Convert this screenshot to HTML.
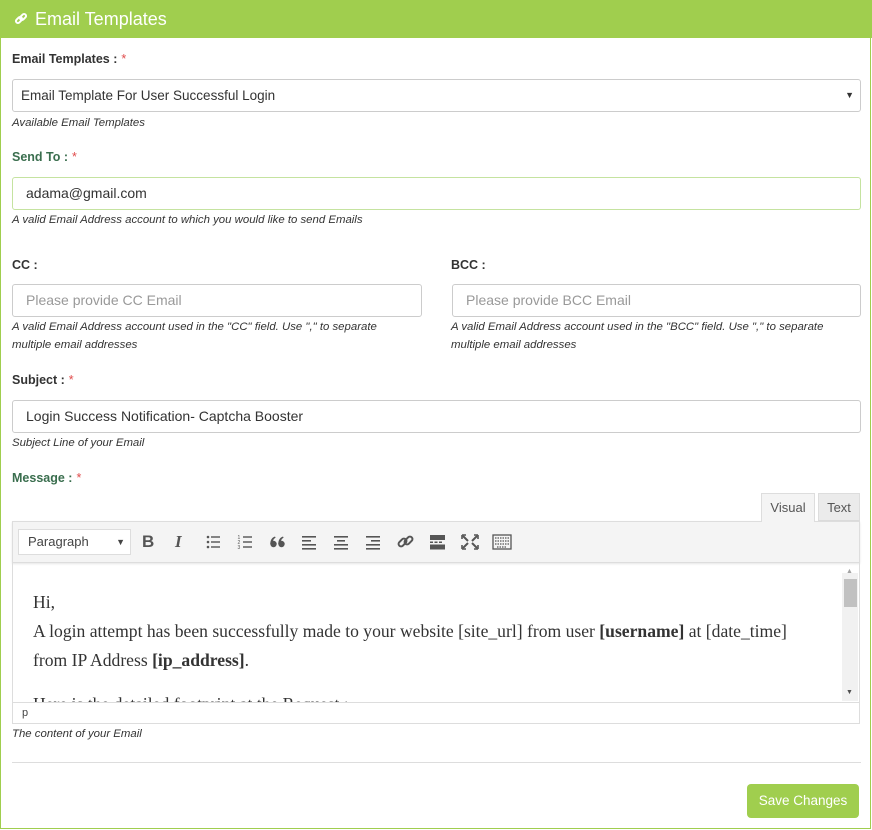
<!DOCTYPE html>
<html><head><meta charset="utf-8"><style>
*{box-sizing:border-box;margin:0;padding:0}
body{width:872px;height:830px;background:#fff;font-family:"Liberation Sans",sans-serif;position:relative;overflow:hidden;color:#333}
.frame{position:absolute;left:0;top:0;width:871px;height:829px;border:1px solid #a0ce4e;border-top:none}
.hdr{position:absolute;left:0;top:0;width:872px;height:38px;background:#a0ce4e;color:#fff;font-size:18px;line-height:38px;padding-left:35px}
.a{position:absolute}
.lbl{font-size:12.5px;font-weight:bold;color:#333}
.lbl .r{color:#e04b4b;font-weight:normal;margin-left:4px}
.g{color:#3a6e4e}
.help{font-size:11.4px;font-style:italic;color:#333;line-height:18px}
.inp{border:1px solid #ccc;border-radius:3px;height:33px;font-size:14px;line-height:31px;padding-left:13px;color:#333}
.ph{color:#999}
.tb{background:#f4f4f4;border:1px solid #ddd}
.ic{position:absolute;top:532px;width:20px;height:20px}
.ed{font-family:"Liberation Serif",serif;font-size:17.6px;color:#333}
</style></head><body>
<div class="frame"></div>
<div class="hdr"><svg class="a" style="left:14px;top:12px" width="14" height="14" viewBox="0 0 14 14" fill="none" stroke="#fff" stroke-width="2"><rect x="1.5" y="6" width="7" height="4" rx="2" transform="rotate(-45 5 8)"/><rect x="5.5" y="3" width="7" height="4" rx="2" transform="rotate(-45 9 5)"/></svg>Email Templates</div>

<div class="a lbl" style="left:12px;top:52px">Email Templates :<span class="r">*</span></div>
<div class="a inp" style="left:12px;top:79px;width:849px;line-height:31px;padding-left:8px;font-size:13.5px">Email Template For User Successful Login<span style="position:absolute;right:6px;top:0;font-size:9px">▼</span></div>
<div class="a help" style="left:12px;top:114px">Available Email Templates</div>

<div class="a lbl g" style="left:12px;top:150px">Send To :<span class="r">*</span></div>
<div class="a inp" style="left:12px;top:177px;width:849px;border-color:#c5e3a0">adama@gmail.com</div>
<div class="a help" style="left:12px;top:211px">A valid Email Address account to which you would like to send Emails</div>

<div class="a lbl" style="left:12px;top:258px">CC :</div>
<div class="a lbl" style="left:451px;top:258px">BCC :</div>
<div class="a inp ph" style="left:12px;top:284px;width:410px">Please provide CC Email</div>
<div class="a inp ph" style="left:452px;top:284px;width:409px">Please provide BCC Email</div>
<div class="a help" style="left:12px;top:318px;width:390px">A valid Email Address account used in the "CC" field. Use "," to separate multiple email addresses</div>
<div class="a help" style="left:451px;top:318px;width:390px">A valid Email Address account used in the "BCC" field. Use "," to separate multiple email addresses</div>

<div class="a lbl" style="left:12px;top:373px">Subject :<span class="r">*</span></div>
<div class="a inp" style="left:12px;top:400px;width:849px">Login Success Notification- Captcha Booster</div>
<div class="a help" style="left:12px;top:434px">Subject Line of your Email</div>

<div class="a lbl g" style="left:12px;top:471px">Message :<span class="r">*</span></div>
<div class="a" style="left:761px;top:493px;width:54px;height:29px;background:#f4f4f4;border:1px solid #ddd;border-bottom:none;font-size:13px;line-height:28px;text-align:center;color:#555;z-index:2">Visual</div>
<div class="a" style="left:818px;top:493px;width:42px;height:28px;background:#ebebeb;border:1px solid #ddd;font-size:13px;line-height:28px;text-align:center;color:#555">Text</div>
<div class="a tb" style="left:12px;top:521px;width:848px;height:42px;box-shadow:0 1px 2px rgba(0,0,0,.1)"></div>
<div class="a" style="left:18px;top:529px;width:113px;height:26px;background:#fff;border:1px solid #ddd;font-size:13px;line-height:24px;padding-left:9px;color:#444">Paragraph<span style="position:absolute;right:5px;font-size:9px">▼</span></div>
<div class="a" style="left:142px;top:532px;font-weight:bold;font-size:17px;color:#555">B</div>
<div class="a" style="left:175px;top:532px;font-style:italic;font-weight:bold;font-size:17px;color:#555;font-family:'Liberation Serif',serif">I</div>
<svg class="ic" style="left:204px" viewBox="0 0 20 20" fill="#555"><circle cx="4" cy="5" r="1.3"/><circle cx="4" cy="10" r="1.3"/><circle cx="4" cy="15" r="1.3"/><rect x="7" y="4.3" width="9" height="1.4"/><rect x="7" y="9.3" width="9" height="1.4"/><rect x="7" y="14.3" width="9" height="1.4"/></svg>
<svg class="ic" style="left:236px" viewBox="0 0 20 20" fill="#555"><text x="1.5" y="7" font-size="5">1</text><text x="1.5" y="12" font-size="5">2</text><text x="1.5" y="17" font-size="5">3</text><rect x="7" y="4.3" width="9" height="1.4"/><rect x="7" y="9.3" width="9" height="1.4"/><rect x="7" y="14.3" width="9" height="1.4"/></svg>
<svg class="ic" style="left:268px" viewBox="0 0 20 20" fill="#555"><circle cx="5.5" cy="12" r="3.2"/><circle cx="13.5" cy="12" r="3.2"/><path d="M2.3 12C2.3 8 4 5.5 7 4.5l.6 1.3C5.5 6.8 5 8.5 5 10z"/><path d="M10.3 12C10.3 8 12 5.5 15 4.5l.6 1.3C13.5 6.8 13 8.5 13 10z"/></svg>
<svg class="ic" style="left:300px" viewBox="0 0 20 20" fill="#555"><rect x="2" y="4" width="14" height="1.6"/><rect x="2" y="8" width="9" height="1.6"/><rect x="2" y="12" width="14" height="1.6"/><rect x="2" y="16" width="14" height="1.6"/></svg>
<svg class="ic" style="left:332px" viewBox="0 0 20 20" fill="#555"><rect x="2" y="4" width="14" height="1.6"/><rect x="5" y="8" width="8" height="1.6"/><rect x="2" y="12" width="14" height="1.6"/><rect x="2" y="16" width="14" height="1.6"/></svg>
<svg class="ic" style="left:364px" viewBox="0 0 20 20" fill="#555"><rect x="2" y="4" width="14" height="1.6"/><rect x="7" y="8" width="9" height="1.6"/><rect x="2" y="12" width="14" height="1.6"/><rect x="2" y="16" width="14" height="1.6"/></svg>
<svg class="ic" style="left:396px" viewBox="0 0 20 20" fill="none" stroke="#555" stroke-width="2"><rect x="2" y="8" width="9" height="5" rx="2.5" transform="rotate(-45 6.5 10.5)"/><rect x="8" y="6" width="9" height="5" rx="2.5" transform="rotate(-45 12.5 8.5)"/></svg>
<svg class="ic" style="left:428px" viewBox="0 0 20 20" fill="#555"><rect x="2" y="3" width="15" height="5"/><rect x="2" y="9.5" width="3" height="1.5"/><rect x="6.5" y="9.5" width="3" height="1.5"/><rect x="11" y="9.5" width="3" height="1.5"/><rect x="2" y="12.5" width="15" height="5"/></svg>
<svg class="ic" style="left:460px" viewBox="0 0 20 20" fill="none" stroke="#555" stroke-width="2"><path d="M3 4l5 5M17 4l-5 5M3 16l5-5M17 16l-5-5"/><path d="M2 3h4M2 3v4M18 3h-4M18 3v4M2 17h4M2 17v-4M18 17h-4M18 17v-4" stroke-width="1.6"/></svg>
<svg class="ic" style="left:492px" viewBox="0 0 20 20" fill="none" stroke="#555" stroke-width="1.3"><rect x="1" y="3" width="18" height="14"/><path d="M3 6h14M3 9h14M3 12h14M5 15h10" stroke-dasharray="1.5 1"/></svg>

<div class="a" style="left:12px;top:563px;width:848px;height:161px;border:1px solid #ddd;border-top:none"></div>
<div class="a" style="left:842px;top:573px;width:16px;height:128px;background:#f1f1f1"></div>
<div class="a" style="left:844px;top:579px;width:13px;height:28px;background:#c1c1c1"></div>
<div class="a" style="left:846px;top:568px;font-size:7px;color:#a3a3a3">▲</div>
<div class="a" style="left:846px;top:689px;font-size:7px;color:#505050">▼</div>
<div class="a ed" style="left:33px;top:588px;width:790px;height:114px;overflow:hidden;line-height:29px">Hi,<br>A login attempt has been successfully made to your website [site_url] from user <b>[username]</b> at [date_time] from IP Address <b>[ip_address]</b>.<br><div style="margin-top:15px">Here is the detailed footprint at the Request :-</div></div>
<div class="a" style="left:13px;top:702px;width:846px;height:21px;border-top:1px solid #ddd;background:#fff;font-size:11px;padding:4px 0 0 9px;color:#444">p</div>
<div class="a help" style="left:12px;top:725px">The content of your Email</div>
<div class="a" style="left:12px;top:762px;width:849px;height:1px;background:#ddd"></div>
<div class="a" style="left:747px;top:784px;width:112px;height:34px;background:#a0ce4e;border-radius:4px;color:#fff;font-size:13.5px;line-height:34px;text-align:center">Save Changes</div>
</body></html>
